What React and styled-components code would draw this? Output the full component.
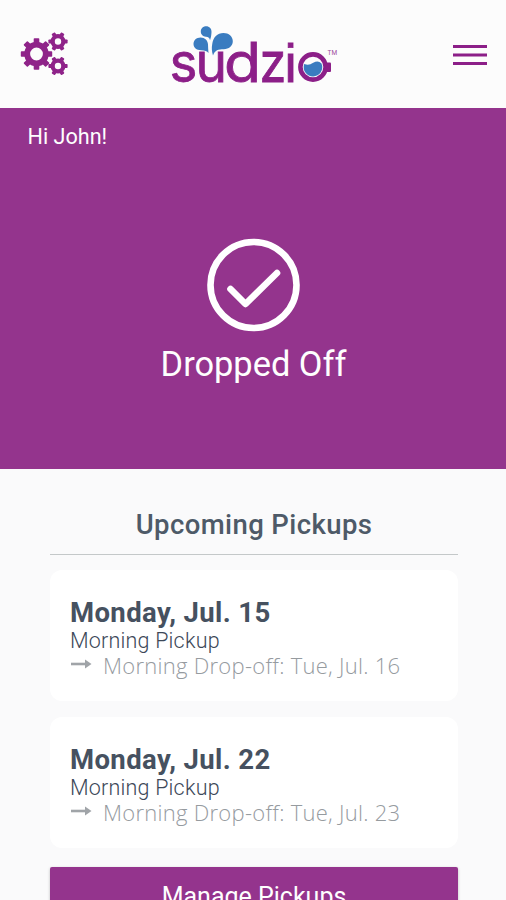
import styled, { createGlobalStyle } from 'styled-components'

const GlobalStyle = createGlobalStyle`
    * {
        box-sizing: border-box;
    }
    body {
        margin: 0;
        background-color: #fafafb;
        font-family: Roboto, sans-serif;
        height: 900px;
        overflow: hidden;
    }
`

const Header = styled.header`
    display: grid;
    grid-template-columns: 52px 1fr 52px;
    align-items: center;
    height: 108px;
    padding: 0 18px;
    background-color: #fcfcfc;
`

const IconButton = styled.button`
    display: flex;
    justify-content: ${props => props.$end ? "flex-end" : "flex-start"};
    padding: 0;
    border: none;
    background: none;
`

const LogoLink = styled.a`
    display: flex;
    justify-content: center;
`

const LogoSvg = styled.svg`
    overflow: visible;
`

const Letter = styled.text`
    font-family: ${props => props.$square ? '"Liberation Sans"' : 'Inter'}, sans-serif;
    font-size: 55px;
    font-weight: 400;
    fill: #8c1f88;
    stroke: #8c1f88;
    stroke-width: 0.8px;
`

const Trademark = styled.text`
    font-family: Roboto, sans-serif;
    font-size: 6.5px;
    fill: #a04c9c;
`

const Hero = styled.section`
    display: flex;
    flex-direction: column;
    align-items: center;
    height: 361px;
    padding-top: 16px;
    background-color: #94348d;
    color: #fefefe;
`

const Greeting = styled.div`
    align-self: flex-start;
    margin: 0 0 88px 27.5px;
    font-size: 21.6px;
    line-height: 26px;
`

const Status = styled.div`
    margin-top: 12px;
    padding-left: 1px;
    font-size: 34.4px;
    line-height: 40px;
`

const Content = styled.main`
    display: flex;
    flex-direction: column;
    width: 408px;
    margin-left: 50px;
    padding-top: 38px;
`

const Heading = styled.h2`
    margin: 0 0 15px;
    padding-bottom: 11px;
    border-bottom: 1px solid #c4c8c9;
    color: #4e5a68;
    font-size: 27.5px;
    font-weight: 500;
    line-height: 36px;
    letter-spacing: 0.4px;
    text-align: center;
`

const PickupList = styled.div`
    display: flex;
    flex-direction: column;
    gap: 16px;
`

const Card = styled.div`
    height: 131px;
    padding: 26px 20px 0;
    background-color: #ffffff;
    border-radius: 12px;
`

const Day = styled.div`
    color: #465160;
    font-size: 27.5px;
    font-weight: 700;
    line-height: 33px;
    letter-spacing: 0.38px;
`

const Slot = styled.div`
    color: #3c4858;
    font-size: 21.5px;
    font-weight: 300;
    line-height: 24px;
    letter-spacing: 0.2px;
`

const DropOff = styled.div`
    display: flex;
    align-items: center;
    gap: 11px;
    color: #969b9f;
    font-family: "Open Sans", sans-serif;
    font-size: 22px;
    font-weight: 300;
    line-height: 24px;
    letter-spacing: 0.27px;
    white-space: nowrap;
`

const ManageButton = styled.button`
    height: 58px;
    margin-top: 19px;
    border: none;
    border-radius: 2px;
    background-color: #94348d;
    box-shadow: 0 1px 3px rgba(0, 0, 0, 0.25);
    color: #fefefe;
    font-family: Roboto, sans-serif;
    font-size: 25px;
`

const pickups = [
    { id: 1, day: 'Monday, Jul. 15', slot: 'Morning Pickup', dropOff: 'Morning Drop-off: Tue, Jul. 16' },
    { id: 2, day: 'Monday, Jul. 22', slot: 'Morning Pickup', dropOff: 'Morning Drop-off: Tue, Jul. 23' },
]

// ring + one rotated tooth per step
const Gear = ({ cx, cy, r, hole, teeth, tooth }) => {
    const body = r * 0.78
    return (
        <g transform={`translate(${cx} ${cy})`} fill="#8f2389">
            <circle r={(body + hole) / 2} fill="none" stroke="#8f2389" strokeWidth={body - hole} />
            {Array.from({ length: teeth }, (_, i) => (
                <rect
                    key={i}
                    x={body - 1.5}
                    y={-tooth / 2}
                    width={r - body + 1.5}
                    height={tooth}
                    rx="0.8"
                    transform={`rotate(${(360 / teeth) * i})`}
                />
            ))}
        </g>
    )
}

const GearsIcon = () => (
    <svg width="52" height="48" viewBox="0 0 52 48">
        <Gear cx={18.5} cy={24} r={15.7} hole={6.4} teeth={8} tooth={5.6} />
        <Gear cx={40} cy={11.5} r={9.6} hole={3.2} teeth={6} tooth={4} />
        <Gear cx={40} cy={36} r={9.6} hole={3.2} teeth={6} tooth={4} />
    </svg>
)

const MenuIcon = () => (
    <svg width="36" height="26" viewBox="0 0 36 26" stroke="#8c1f88" strokeWidth="3">
        <path d="M1 5.5h34M1 14h34M1 22.5h34" />
    </svg>
)

// the wordmark is wider on the d and narrower on the z than the font
const Logo = () => (
    <LogoSvg width="180" height="72" viewBox="0 0 180 72">
        <Letter transform="translate(6.5 63.5) scale(0.96 1)">s</Letter>
        <Letter transform="translate(32.5 63.5) scale(0.97 1)">u</Letter>
        <Letter transform="translate(61 63.5) scale(1.1 1)">d</Letter>
        <Letter transform="translate(96.5 63.5) scale(0.88 1)">z</Letter>
        <Letter $square transform="translate(121.5 63.5) scale(1 0.96)">i</Letter>
        <circle cx="150" cy="49" r="12.6" fill="#fcfcfc" stroke="#8c1f88" strokeWidth="4.6" />
        <rect x="163" y="44.5" width="5" height="9.5" rx="1" fill="#8c1f88" />
        <path d="M141.200 46c4 1.500 6 0.500 9-1.200c3.500-2 6-1.800 8.300 0.700A9.300 9.300 0 1 1 141.200 46z" fill="#3a7cc0" />
        <g fill="#3a7cc0">
            <path d="M43 8.300c3.500 0 5.800 2.500 5.500 6c-0.200 3-0.500 5.500-1.500 8c-0.300-2.500-1.500-3.500-4-3.600c-3.200-0.200-5.300-2.400-5.200-5.200c0.100-3 2.300-5.200 5.200-5.200z" />
            <path d="M37.500 19.500c4.500 0 7.300 3 7.500 7c0.100 3 0.200 5.500 0.500 8.500c-1.500-2-3.500-2.800-7.500-2.800c-4.500 0-7.500-2.500-7.500-6.200c0-3.700 3-6.500 7-6.500z" />
            <path d="M60.500 15c5.200 0 9.300 3.500 9.300 8.300c0 4.800-4 7.900-9 7.900c-5.500 0-9 0.800-10.800 6.300c-1.200-4.500-1.500-7.500-0.800-11.300c1-7 5-11.200 11.300-11.200z" />
        </g>
        <Trademark x="164.5" y="37">TM</Trademark>
    </LogoSvg>
)

const CheckIcon = () => (
    <svg width="94" height="94" viewBox="0 0 94 94" fill="none" stroke="#ffffff" strokeWidth="6.6">
        <circle cx="47.5" cy="47" r="43" />
        <path d="M24.5 51L39.5 66L71 35" strokeLinecap="round" strokeLinejoin="round" />
    </svg>
)

const ArrowIcon = () => (
    <svg width="22" height="12" viewBox="0 0 22 12">
        <path d="M1 5h15" stroke="#a0a4a8" strokeWidth="2.6" />
        <path d="M15 0.5L21.5 5L15 9.5z" fill="#a0a4a8" />
    </svg>
)

const Pickup = ({ pickup }) => (
    <Card>
        <Day>{pickup.day}</Day>
        <Slot>{pickup.slot}</Slot>
        <DropOff>
            <ArrowIcon />
            <span>{pickup.dropOff}</span>
        </DropOff>
    </Card>
)

const App = () => {
    return (
        <>
            <GlobalStyle />
            <Header>
                <IconButton aria-label="Settings"><GearsIcon /></IconButton>
                <LogoLink><Logo /></LogoLink>
                <IconButton $end aria-label="Menu"><MenuIcon /></IconButton>
            </Header>
            <Hero>
                <Greeting>Hi John!</Greeting>
                <CheckIcon />
                <Status>Dropped Off</Status>
            </Hero>
            <Content>
                <Heading>Upcoming Pickups</Heading>
                <PickupList>
                    {pickups.map(pickup => <Pickup key={pickup.id} pickup={pickup} />)}
                </PickupList>
                <ManageButton>Manage Pickups</ManageButton>
            </Content>
        </>
    )
}

export default App
